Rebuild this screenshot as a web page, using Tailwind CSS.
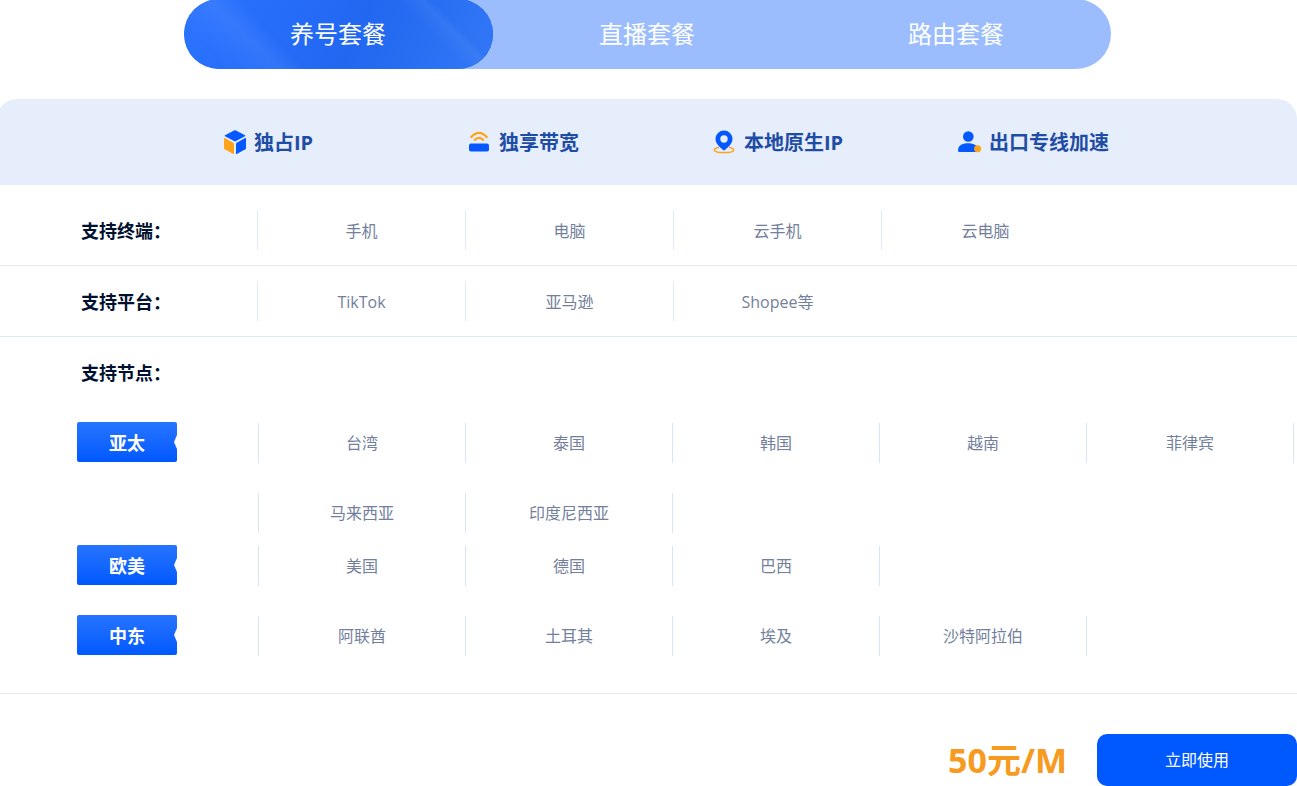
<!DOCTYPE html>
<html lang="zh-CN">
<head>
<meta charset="utf-8">
<meta name="viewport" content="width=device-width, initial-scale=1">
<title>套餐</title>
<script src="https://cdn.jsdelivr.net/npm/@tailwindcss/browser@4"></script>
</head>
<body class="bg-white overflow-x-hidden font-['Open_Sans','Noto_Sans_CJK_SC',sans-serif] text-[#737f9c]">
<main class="-ml-[3px] -mt-px">
  <nav class="mx-auto flex h-[70px] max-w-[927px] rounded-full bg-[#9bbdfd] text-2xl text-white overflow-hidden">
    <button type="button" class="relative flex-1 overflow-hidden rounded-full bg-[#2468f2]">
      <svg class="absolute inset-0 h-full w-full" viewBox="0 0 309 70" preserveAspectRatio="none" aria-hidden="true">
        <defs>
          <linearGradient id="base" x1="0" y1="0" x2="1" y2="0.1">
            <stop offset="0" stop-color="#2c73ff"/><stop offset="0.3" stop-color="#266dfa"/><stop offset="0.6" stop-color="#2167f0"/><stop offset="1" stop-color="#2f75f5"/>
          </linearGradient>
          <linearGradient id="ray" gradientUnits="userSpaceOnUse" x1="34" y1="62" x2="75" y2="21">
            <stop offset="0" stop-color="#fff" stop-opacity="0"/><stop offset="0.65" stop-color="#fff" stop-opacity="0.07"/><stop offset="1" stop-color="#fff" stop-opacity="0"/>
          </linearGradient>
          <linearGradient id="glint" gradientUnits="userSpaceOnUse" x1="262" y1="48" x2="278" y2="32">
            <stop offset="0" stop-color="#fff" stop-opacity="0"/><stop offset="0.7" stop-color="#fff" stop-opacity="0.05"/><stop offset="1" stop-color="#fff" stop-opacity="0"/>
          </linearGradient>
        </defs>
        <rect width="309" height="70" fill="url(#base)"/>
        <rect width="309" height="70" fill="url(#ray)"/>
        <rect width="309" height="70" fill="url(#glint)"/>
      </svg>
      <span class="relative">养号套餐</span>
    </button>
    <button type="button" class="flex-1">直播套餐</button>
    <button type="button" class="flex-1">路由套餐</button>
  </nav>

  <section class="mt-[30px]">
    <ul class="grid h-[86px] grid-cols-4 items-center rounded-t-[20px] bg-[#e7eefb] px-40 text-xl leading-6 font-bold text-[#1f4da5]">
      <li class="flex items-center gap-[7px] pl-[66px] whitespace-nowrap">
        <svg class="size-6 shrink-0" viewBox="0 0 24 24" aria-hidden="true">
          <path d="M11 .5q1-.5 2 0L22 5.200q.8.500 0 1L13 11q-1 .5-2 0L2 6.200q-.8-.500 0-1Z" fill="#0458ff"/>
          <path d="M1 8.500q0-.9.900-.4L10.300 12.800q.7.400.7 1.200V23.500q0 .8-.8.400L1.700 19.300Q1 18.900 1 18Z" fill="#ffa31a"/>
          <path d="M23 8.500q0-.9-.9-.4L13.700 12.800q-.7.400-.7 1.200V23.500q0 .8.8.400L22.300 19.300Q23 18.900 23 18Z" fill="#0458ff"/>
        </svg>
        <span class="pt-[2px]">独占IP</span>
      </li>
      <li class="flex items-center gap-[7px] pl-[66px] whitespace-nowrap">
        <svg class="size-6 shrink-0" viewBox="0 0 24 24" aria-hidden="true">
          <rect x="1" y="13.500" width="20" height="8" rx="2" fill="#0458ff"/>
          <path d="M2.600 7.800Q11-2.200 19.400 7.800M6.200 10.400Q11 5.200 15.800 10.400" fill="none" stroke="#ffa31a" stroke-width="2.200"/>
        </svg>
        <span class="pt-[2px]">独享带宽</span>
      </li>
      <li class="flex items-center gap-[7px] pl-[66px] whitespace-nowrap">
        <svg class="size-6 shrink-0" viewBox="0 0 24 24" aria-hidden="true">
          <path d="M6 17.300C3 18 1.300 18.900 1.300 19.900C1.300 21.500 5.500 22.600 11 22.600S20.700 21.500 20.700 19.900C20.700 18.900 19 18 16 17.300" fill="none" stroke="#ffa31a" stroke-width="1.500"/>
          <path fill-rule="evenodd" d="M11 .5a8.500 8.500 0 0 1 8.500 8.500C19.500 13.600 15 17.200 12 19.900Q11 20.700 10 19.900C7 17.200 2.500 13.600 2.500 9A8.500 8.500 0 0 1 11 .5ZM11 5.300a3.700 3.700 0 1 0 0 7.400a3.700 3.700 0 1 0 0-7.400Z" fill="#0458ff"/>
        </svg>
        <span class="pt-[2px]">本地原生IP</span>
      </li>
      <li class="flex items-center gap-[7px] pl-[66px] whitespace-nowrap">
        <svg class="size-6 shrink-0" viewBox="0 0 24 24" aria-hidden="true">
          <circle cx="10.300" cy="6.500" r="5.300" fill="#0458ff"/>
          <path d="M0 20.500C0 15.800 4 13.300 10 13.300S20 15.800 20 19V22H1.500Q0 22 0 20.500Z" fill="#0458ff"/>
          <circle cx="19.600" cy="18.700" r="3.500" fill="#ffa31a"/>
        </svg>
        <span class="pt-[2px]">出口专线加速</span>
      </li>
    </ul>

    <dl class="flex items-center border-b border-[#dfe9fa] pt-[25px] pb-[15px] pl-[84px]">
      <dt class="h-10 w-44 shrink-0 text-lg leading-[42px] font-bold text-[#00112f]">支持终端：</dt>
      <dd class="h-10 w-52 border-l border-[#dfe9fa] text-center leading-[42px]">手机</dd>
      <dd class="h-10 w-52 border-l border-[#dfe9fa] text-center leading-[42px]">电脑</dd>
      <dd class="h-10 w-52 border-l border-[#dfe9fa] text-center leading-[42px]">云手机</dd>
      <dd class="h-10 w-52 border-l border-[#dfe9fa] text-center leading-[42px]">云电脑</dd>
    </dl>
    <dl class="flex items-center border-b border-[#dfe9fa] py-[15px] pl-[84px]">
      <dt class="h-10 w-44 shrink-0 text-lg leading-[42px] font-bold text-[#00112f]">支持平台：</dt>
      <dd class="h-10 w-52 border-l border-[#dfe9fa] text-center leading-[42px]">TikTok</dd>
      <dd class="h-10 w-52 border-l border-[#dfe9fa] text-center leading-[42px]">亚马逊</dd>
      <dd class="h-10 w-52 border-l border-[#dfe9fa] text-center leading-[42px]">Shopee等</dd>
    </dl>

    <section class="border-b border-[#dfe9f5] pt-[15px] pb-2">
      <h2 class="h-10 pl-[84px] text-lg leading-[42px] font-bold text-[#00112f]">支持节点：</h2>
      <div class="mt-[30px] pl-20">
        <div class="flex min-h-[70px] items-start">
          <h3 class="relative mr-20 h-10 w-[100px] shrink-0 overflow-hidden rounded-xs bg-linear-to-b from-[#2674ff] to-[#0058ff] text-center text-lg leading-[42px] font-bold text-white">亚太
            <svg class="absolute top-3 right-0 h-4 w-[3px]" viewBox="0 0 3 16" aria-hidden="true"><path d="M3 1L0 8L3 15Z" fill="#fff"/></svg>
          </h3>
          <ul class="flex flex-wrap gap-y-[30px] pt-px pb-3 pl-px">
            <li class="-mr-px h-10 w-52 border-x border-[#d5e5fb] text-center leading-10">台湾</li>
            <li class="-mr-px h-10 w-52 border-x border-[#d5e5fb] text-center leading-10">泰国</li>
            <li class="-mr-px h-10 w-52 border-x border-[#d5e5fb] text-center leading-10">韩国</li>
            <li class="-mr-px h-10 w-52 border-x border-[#d5e5fb] text-center leading-10">越南</li>
            <li class="-mr-px h-10 w-52 border-x border-[#d5e5fb] text-center leading-10">菲律宾</li>
            <li class="-mr-px h-10 w-52 border-x border-[#d5e5fb] text-center leading-10">马来西亚</li>
            <li class="-mr-px h-10 w-52 border-x border-[#d5e5fb] text-center leading-10">印度尼西亚</li>
          </ul>
        </div>
        <div class="flex min-h-[70px] items-start">
          <h3 class="relative mr-20 h-10 w-[100px] shrink-0 overflow-hidden rounded-xs bg-linear-to-b from-[#2674ff] to-[#0058ff] text-center text-lg leading-[42px] font-bold text-white">欧美
            <svg class="absolute top-3 right-0 h-4 w-[3px]" viewBox="0 0 3 16" aria-hidden="true"><path d="M3 1L0 8L3 15Z" fill="#fff"/></svg>
          </h3>
          <ul class="flex flex-wrap gap-y-[30px] pt-px pb-3 pl-px">
            <li class="-mr-px h-10 w-52 border-x border-[#d5e5fb] text-center leading-10">美国</li>
            <li class="-mr-px h-10 w-52 border-x border-[#d5e5fb] text-center leading-10">德国</li>
            <li class="-mr-px h-10 w-52 border-x border-[#d5e5fb] text-center leading-10">巴西</li>
          </ul>
        </div>
        <div class="flex min-h-[70px] items-start">
          <h3 class="relative mr-20 h-10 w-[100px] shrink-0 overflow-hidden rounded-xs bg-linear-to-b from-[#2674ff] to-[#0058ff] text-center text-lg leading-[42px] font-bold text-white">中东
            <svg class="absolute top-3 right-0 h-4 w-[3px]" viewBox="0 0 3 16" aria-hidden="true"><path d="M3 1L0 8L3 15Z" fill="#fff"/></svg>
          </h3>
          <ul class="flex flex-wrap gap-y-[30px] pt-px pb-3 pl-px">
            <li class="-mr-px h-10 w-52 border-x border-[#d5e5fb] text-center leading-10">阿联酋</li>
            <li class="-mr-px h-10 w-52 border-x border-[#d5e5fb] text-center leading-10">土耳其</li>
            <li class="-mr-px h-10 w-52 border-x border-[#d5e5fb] text-center leading-10">埃及</li>
            <li class="-mr-px h-10 w-52 border-x border-[#d5e5fb] text-center leading-10">沙特阿拉伯</li>
          </ul>
        </div>
      </div>
    </section>

    <div class="mt-10 flex items-center justify-end gap-[30px]">
      <strong class="text-[34px] leading-[52px] font-bold text-[#f79a20]">50元/M</strong>
      <button type="button" class="h-[52px] w-[200px] rounded-[10px] bg-[#0058ff] text-base text-white">立即使用</button>
    </div>
  </section>
</main>
</body>
</html>
